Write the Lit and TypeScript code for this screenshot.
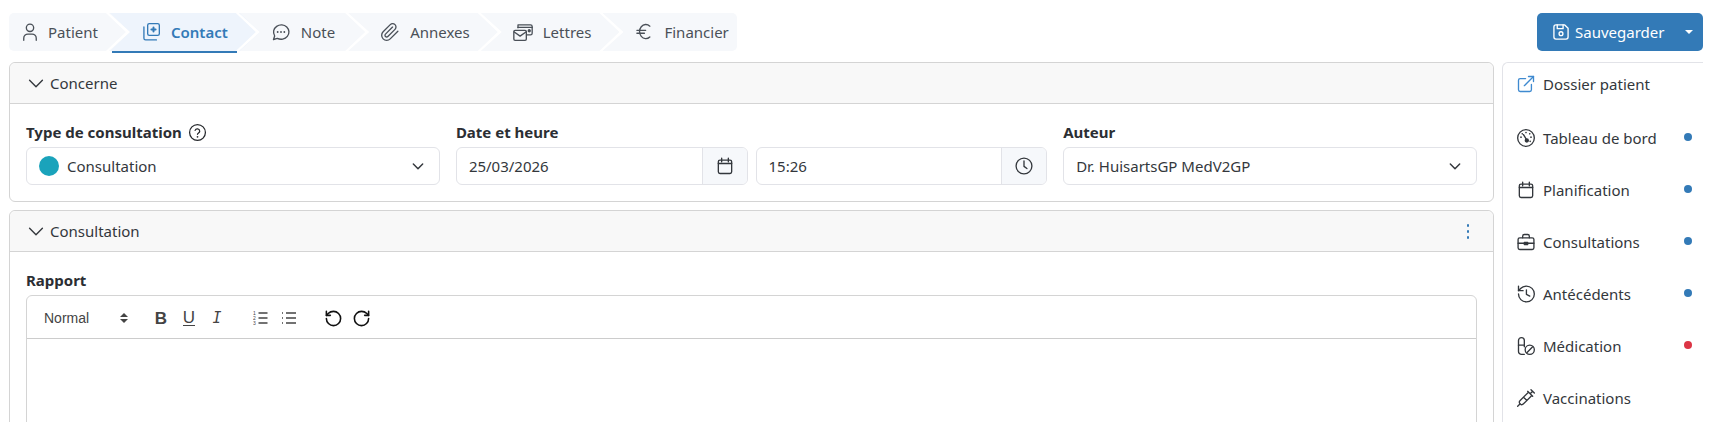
import { LitElement, html, css, svg } from "lit";
import { customElement } from "lit/decorators.js";

const icon = (body: unknown, size = 20, sw = 1.6) =>
  html`<svg class="ic" width=${size} height=${size} viewBox="0 0 24 24" fill="none" stroke="currentColor" stroke-width=${sw} stroke-linecap="round" stroke-linejoin="round">${body}</svg>`;

const P = {
  user: svg`<circle cx="12" cy="7" r="4.400"/><path d="M4.500 22v-2.500a5 5 0 0 1 5-5h5a5 5 0 0 1 5 5V22"/>`,
  contact: svg`<rect x="8" y="2" width="14" height="14" rx="2"/><path d="M3.500 6v13.500a2 2 0 0 0 2 2h13"/><path d="M12.500 9h5M15 6.500v5" stroke-width="2.400"/>`,
  note: svg`<path d="M3 21l1.400-4.200C1.900 12.700 3 7.800 6.800 5.200c3.800-2.600 9-2.200 12.100.800 3.200 3.100 3.500 7.900.700 11.300-2.800 3.400-7.900 4.400-12 2.400L3 21z"/><path d="M8 12h.01M12 12h.01M16 12h.01" stroke-width="2.200"/>`,
  clip: svg`<path d="m21.440 11.050-9.190 9.190a6 6 0 0 1-8.490-8.490l8.570-8.570A4 4 0 1 1 18 8.840l-8.590 8.570a2 2 0 0 1-2.830-2.830l8.490-8.480"/>`,
  letters: svg`<path d="M6 7V3.500h15a2 2 0 0 1 2 2v8a2 2 0 0 1-2 2h-4"/><path d="M6 6.500h17"/><circle cx="19.500" cy="10.500" r="1.200" fill="currentColor"/><rect x="1" y="10" width="15" height="12" rx="1.500"/><path d="m1.500 12 7 5 7-5"/>`,
  euro: svg`<path d="M19 5a7.500 8.500 0 1 0 0 13"/><path d="M14 10H3.500M12.500 13.500H3.500"/>`,
  save: svg`<path d="M6 3.500h10.500l4 4V18a2.500 2.500 0 0 1-2.500 2.500H6A2.500 2.500 0 0 1 3.500 18V6A2.500 2.500 0 0 1 6 3.500z"/><circle cx="12" cy="14" r="2.300"/><path d="M14.500 3.500V8h-7V3.500"/>`,
  external: svg`<path d="M11.500 5.500H5a2 2 0 0 0-2 2V19a2 2 0 0 0 2 2h11.500a2 2 0 0 0 2-2v-6.500"/><path d="M10 14 21 3"/><path d="M15 3h6v6"/>`,
  gauge: svg`<circle cx="12" cy="12" r="10"/><path d="m9 8 3.600 6"/><circle cx="13" cy="15" r="1.800" fill="currentColor"/><path d="M6 11h.01M7.500 7h.01M12 5.500h.01M16.500 7h.01M18 11h.01M17 16h.01" stroke-width="2"/>`,
  calendar: svg`<rect x="4" y="5" width="16" height="16" rx="2"/><path d="M8 2.500V7M16 2.500V7M4 9h16"/>`,
  clock: svg`<circle cx="12" cy="12" r="9.500"/><path d="M12 6v6.500l3.500 2.500"/>`,
  briefcase: svg`<rect x="2.500" y="7" width="19" height="14" rx="2"/><path d="M8 7V5a2 2 0 0 1 2-2h4a2 2 0 0 1 2 2v2"/><path d="M2.500 13.500h19"/><path d="M10 12.500h4v2.500h-4z" fill="currentColor"/>`,
  history: svg`<path d="M3 12a9.500 9.500 0 1 0 9.500-9.500A10 10 0 0 0 5.500 5.500L3 8"/><path d="M3 2.500V8h5.500"/><path d="M12.500 7v5.500l4 2"/>`,
  meds: svg`<path d="M10 22H6.500A3.500 3.500 0 0 1 3 18.500V5.500a3.500 3.500 0 0 1 7 0V13"/><path d="M3 11h7"/><circle cx="16.500" cy="16.500" r="5.500"/><path d="m13 20 7-7"/>`,
  syringe: svg`<path d="m18 2 4 4M17 7l3-3M19 9 8.700 19.300c-1 1-2.500 1-3.400 0l-.6-.6c-1-1-1-2.500 0-3.400L15 5M9 11l4 4M5 19l-3 3M14 4l6 6"/>`,
  chevron: svg`<path d="m5 9 7 7 7-7"/>`,
  question: svg`<circle cx="12" cy="12" r="10"/><path d="M9 9.300a3 3 0 0 1 5.800 1c0 2-2.800 2.300-2.800 4"/><path d="M12 17.500h.01" stroke-width="2.200"/>`,
  undo: svg`<path d="M3 12a9 9 0 1 0 9-9 9.750 9.750 0 0 0-6.740 2.740L3 8"/><path d="M3 3v5h5"/>`,
  redo: svg`<path d="M21 12a9 9 0 1 1-9-9 9.750 9.750 0 0 1 6.740 2.740L21 8"/><path d="M21 3v5h-5"/>`,
};

@customElement("app-root")
export class AppRoot extends LitElement {
  static styles = css`
    :host {
      display: block;
      height: 422px;
      overflow: hidden;
      background: #fff;
      color: #33373c;
      font-family: "Noto Sans", sans-serif;
      font-size: 15px;
    }
    .ic { flex: none; display: block; }
    .page { padding: 13px 10px 0 9px; }

    .top { display: flex; justify-content: space-between; height: 38px; margin-bottom: 11px; }
    .tabs { display: flex; background: #f6f8fb; border-radius: 5px; height: 38px; }
    .tab {
      position: relative;
      display: flex;
      align-items: center;
      gap: 10px;
      padding: 0 12px 0 31px;
      color: #4a5058;
      white-space: nowrap;
    }
    .tab:first-child { padding-left: 11px; gap: 8px; }
    .tab:nth-child(3) { padding-right: 14px; }
    .tab:last-child { padding-right: 8px; }
    .tab:not(:last-child)::after {
      content: "";
      position: absolute;
      top: 0;
      right: -20px;
      width: 24px;
      height: 100%;
      background: #fff;
      clip-path: polygon(0 0, 3px 0, 24px 50%, 3px 100%, 0 100%, 20px 50%);
      z-index: 2;
    }
    .tab > * { position: relative; z-index: 1; }
    .tab.active { color: #337ab7; font-weight: 600; }
    .tab.active .bg {
      position: absolute;
      z-index: 0;
      top: 0;
      bottom: 0;
      left: 0;
      right: -20px;
      background: #eef4fc;
      clip-path: polygon(0 0, calc(100% - 20px) 0, 100% 50%, calc(100% - 20px) 100%, 0 100%, 20px 50%);
    }
    .tab.active .line {
      position: absolute;
      left: 2px;
      right: 3px;
      top: 38px;
      height: 2px;
      background: #337ab7;
    }

    .save { display: flex; align-items: center; background: #337ab7; color: #fff; border-radius: 5px; width: 166px; padding: 0 10px 0 14px; box-sizing: border-box; gap: 4px; }
    .save .caret { margin-left: auto; border: 4px solid transparent; border-top-color: #fff; border-bottom: 0; width: 0; height: 0; }

    .cols { display: flex; gap: 8px; align-items: flex-start; }
    .main { flex: 1; min-width: 0; display: flex; flex-direction: column; gap: 8px; }

    .card { border: 1px solid #d4d4d4; border-radius: 6px; background: #fff; }
    .head {
      display: flex;
      align-items: center;
      gap: 3px;
      height: 40px;
      padding: 0 16px 0 15px;
      background: #f8f8f8;
      border-bottom: 1px solid #d4d4d4;
      border-radius: 6px 6px 0 0;
    }
    .kebab { margin-left: auto; display: flex; flex-direction: column; gap: 3px; margin-right: 8px; }
    .kebab i { width: 2px; height: 3px; background: #337ab7; border-radius: 1px; }

    .body { padding: 16px 16px 16px; }
    .grid { display: grid; grid-template-columns: 7fr 10fr 7fr; gap: 16px; }
    label { display: flex; align-items: center; gap: 6px; height: 24px; margin-bottom: 3px; font-weight: 700; color: #2b2e33; }
    label .ic { color: #26292d; }
    .field {
      display: flex;
      align-items: center;
      height: 38px;
      box-sizing: border-box;
      border: 1px solid #e2e3e8;
      border-radius: 6px;
      padding: 0 13px 0 12px;
      background: #fff;
    }
    .dot-big { width: 20px; height: 20px; border-radius: 50%; background: #1aa3bb; margin-right: 8px; }
    .field > .ic:last-child { margin-left: auto; }
    .pair { display: flex; gap: 8px; }
    .group { flex: 1; padding: 0 0 0 12px; overflow: hidden; }
    .addon { margin-left: auto; width: 44px; height: 100%; display: flex; align-items: center; justify-content: center; background: #f6f8fb; border-left: 1px solid #e2e3e8; }

    .rapport { height: 300px; }
    .editor { border: 1px solid #d4d4d4; border-radius: 6px 6px 0 0; height: 200px; }
    .toolbar {
      display: flex;
      align-items: center;
      box-sizing: border-box;
      height: 43px;
      padding: 2px 0 0 17px;
      border-bottom: 1px solid #ccc;
      color: #444;
    }
    .picker { display: flex; align-items: center; width: 103px; font-family: "Liberation Sans", sans-serif; font-size: 14px; color: #444; }
    .updown { margin-left: auto; margin-right: 19px; display: flex; flex-direction: column; gap: 2px; }
    .updown i { width: 0; height: 0; border: 4px solid transparent; }
    .updown i:first-child { border-bottom-color: #444; border-top: 0; }
    .updown i:last-child { border-top-color: #444; border-bottom: 0; }
    .fmt { display: flex; width: 28px; justify-content: center; font-size: 17px; line-height: 1; }
    .b { font-family: "Liberation Sans", sans-serif; font-weight: 700; }
    .u { font-family: "Liberation Sans", sans-serif; border-bottom: 1px solid #444; line-height: 15px; }
    .i { font-family: "DejaVu Sans Mono", monospace; font-style: italic; font-size: 15px; }
    .lists { display: flex; gap: 12px; margin-left: 22px; }
    .hist { display: flex; gap: 9px; margin-left: 27px; color: #111; }

    .side {
      width: 200px;
      height: 360px;
      border-left: 1px solid #e2e3e8;
      border-top: 1px solid #e2e3e8;
      border-radius: 6px 0 0 0;
      padding-top: 1px;
    }
    .item { display: flex; align-items: center; height: 52px; padding: 0 11px 0 13px; gap: 7px; white-space: nowrap; }
    .item:first-child { height: 40px; margin-bottom: 8px; }
    .item .ext { color: #3f8ad0; }
    .item .mark { margin-left: auto; width: 8px; height: 8px; border-radius: 50%; background: #337ab7; transform: translateY(-1px); }
    .item .mark.red { background: #dc3545; }
  `;

  private tabs: [string, unknown][] = [
    ["Patient", P.user],
    ["Contact", P.contact],
    ["Note", P.note],
    ["Annexes", P.clip],
    ["Lettres", P.letters],
    ["Financier", P.euro],
  ];

  private items: [string, unknown, string][] = [
    ["Dossier patient", P.external, ""],
    ["Tableau de bord", P.gauge, "blue"],
    ["Planification", P.calendar, "blue"],
    ["Consultations", P.briefcase, "blue"],
    ["Antécédents", P.history, "blue"],
    ["Médication", P.meds, "red"],
    ["Vaccinations", P.syringe, ""],
  ];

  render() {
    return html`<div class="page">
      <div class="top">
        <div class="tabs">
          ${this.tabs.map(
            ([name, body]) => html`<div class="tab ${name === "Contact" ? "active" : ""}">
              ${name === "Contact" ? html`<span class="bg"></span><span class="line"></span>` : ""}
              ${icon(body)}<span>${name}</span>
            </div>`
          )}
        </div>
        <div class="save">${icon(P.save)}<span>Sauvegarder</span><span class="caret"></span></div>
      </div>
      <div class="cols">
        <div class="main">
          <section class="card">
            <div class="head">${icon(P.chevron, 22, 1.5)}<span>Concerne</span></div>
            <div class="body grid">
              <div>
                <label>Type de consultation ${icon(P.question, 19, 1.6)}</label>
                <div class="field"><span class="dot-big"></span><span>Consultation</span>${icon(P.chevron, 16, 2.2)}</div>
              </div>
              <div>
                <label>Date et heure</label>
                <div class="pair">
                  <div class="field group"><span>25/03/2026</span><span class="addon">${icon(P.calendar)}</span></div>
                  <div class="field group"><span>15:26</span><span class="addon">${icon(P.clock)}</span></div>
                </div>
              </div>
              <div>
                <label>Auteur</label>
                <div class="field"><span>Dr. HuisartsGP MedV2GP</span>${icon(P.chevron, 16, 2.2)}</div>
              </div>
            </div>
          </section>
          <section class="card rapport">
            <div class="head">${icon(P.chevron, 22, 1.5)}<span>Consultation</span><span class="kebab"><i></i><i></i><i></i></span></div>
            <div class="body">
              <label>Rapport</label>
              <div class="editor">
                <div class="toolbar">
                  <span class="picker">Normal<span class="updown"><i></i><i></i></span></span>
                  <span class="fmt"><span class="b">B</span></span>
                  <span class="fmt"><span class="u">U</span></span>
                  <span class="fmt"><span class="i">I</span></span>
                  <span class="lists">
                    <svg width="16" height="16" viewBox="0 0 16 16" fill="none" stroke="#444" stroke-width="1.500">
                      <path d="M5.500 3h9M5.500 8h9M5.500 13h9"/>
                      <g fill="#444" stroke="none" font-size="5" font-family="Liberation Sans"><text x="0" y="4.500">1</text><text x="0" y="9.500">2</text><text x="0" y="14.500">3</text></g>
                    </svg>
                    <svg width="16" height="16" viewBox="0 0 16 16" fill="none" stroke="#444" stroke-width="1.500">
                      <path d="M5 3h10M5 8h10M5 13h10M1 3h1M1 8h1M1 13h1"/>
                    </svg>
                  </span>
                  <span class="hist">${icon(P.undo, 19, 2)}${icon(P.redo, 19, 2)}</span>
                </div>
              </div>
            </div>
          </section>
        </div>
        <aside class="side">
          ${this.items.map(
            ([name, body, dot], i) => html`<div class="item">
              <span class=${i === 0 ? "ext" : ""}>${icon(body)}</span>
              <span>${name}</span>
              ${dot ? html`<span class="mark ${dot === "red" ? "red" : ""}"></span>` : ""}
            </div>`
          )}
        </aside>
      </div>
    </div>`;
  }
}
